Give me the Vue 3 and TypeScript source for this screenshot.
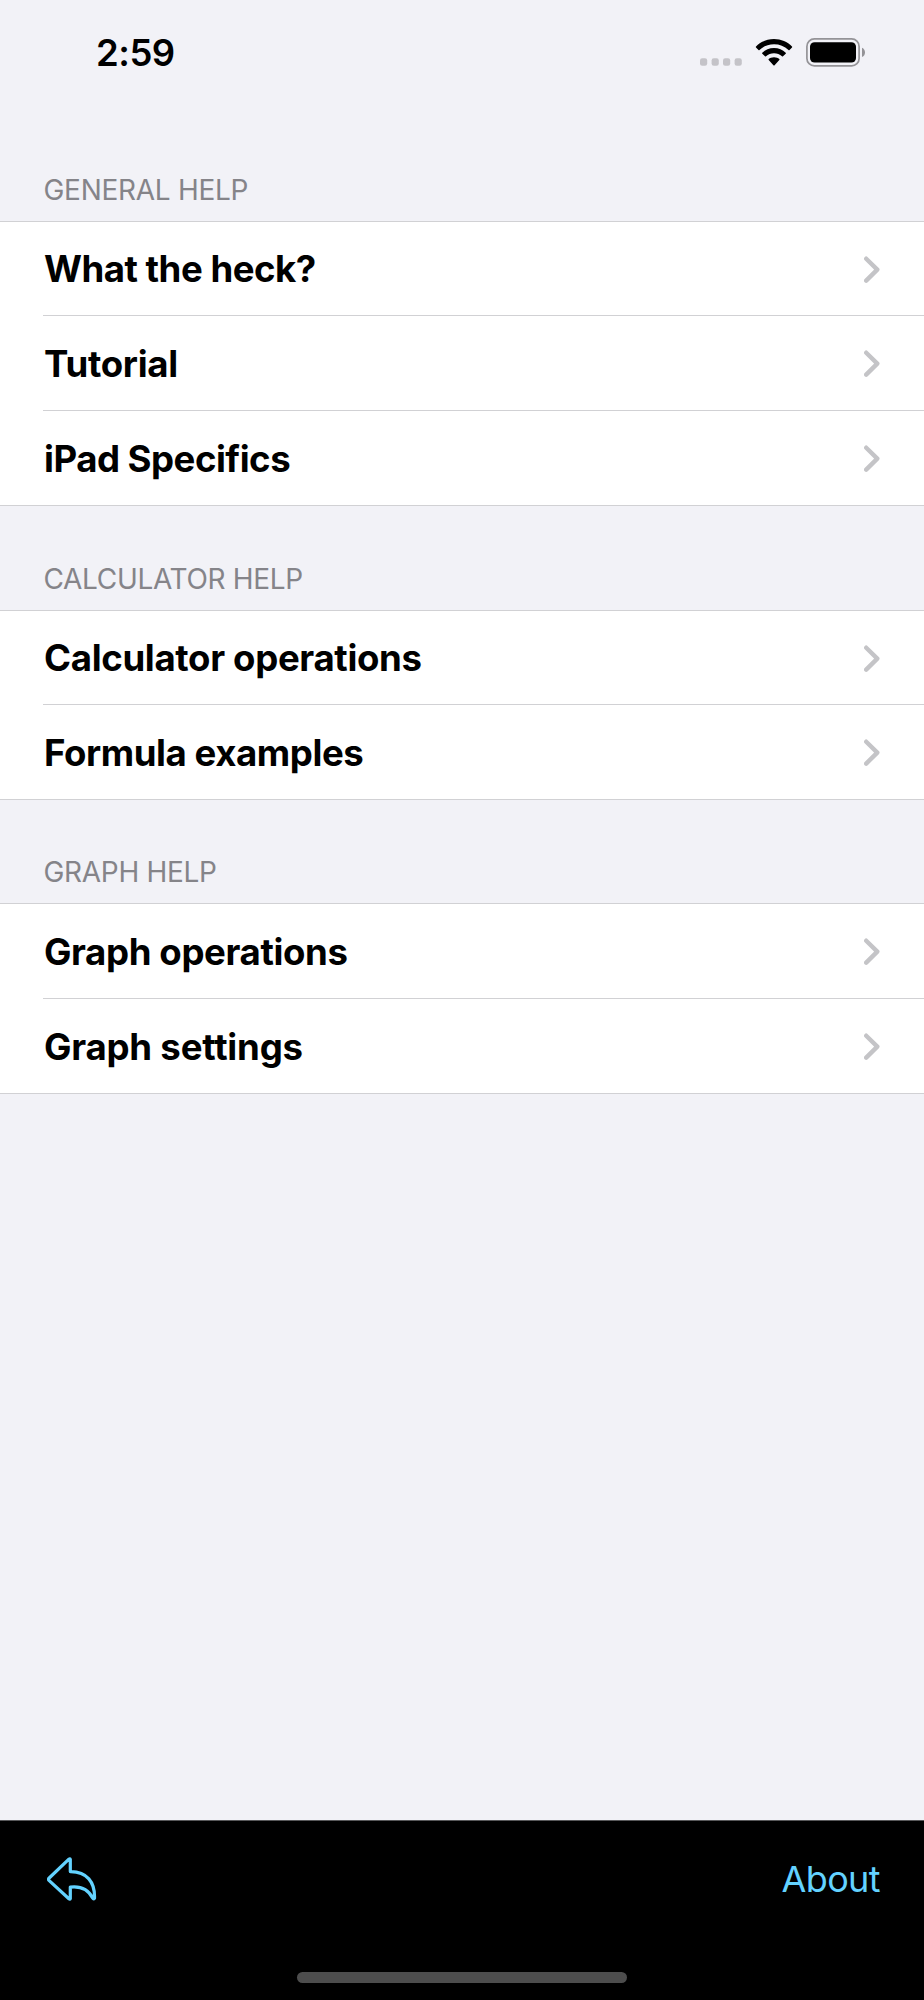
<script setup lang="ts">
interface HelpRow {
  title: string
  spacing: number
}

interface HelpSection {
  id: string
  heading: string
  spacing: number
  rows: HelpRow[]
}

const sections: HelpSection[] = [
  {
    id: 'general',
    heading: 'GENERAL HELP',
    spacing: -0.28,
    rows: [
      { title: 'What the heck?', spacing: -0.48 },
      { title: 'Tutorial', spacing: -0.28 },
      { title: 'iPad Specifics', spacing: -0.5 },
    ],
  },
  {
    id: 'calculator',
    heading: 'CALCULATOR HELP',
    spacing: -0.33,
    rows: [
      { title: 'Calculator operations', spacing: -0.33 },
      { title: 'Formula examples', spacing: -0.42 },
    ],
  },
  {
    id: 'graph',
    heading: 'GRAPH HELP',
    spacing: -0.3,
    rows: [
      { title: 'Graph operations', spacing: -0.37 },
      { title: 'Graph settings', spacing: -0.2 },
    ],
  },
]
</script>

<template>
  <div class="screen">
    <header class="status">
      <span class="time">2:59</span>
      <div class="indicators">
        <svg class="dots" width="42" height="8" viewBox="0 0 42 8">
          <rect x="0" y="0.2" width="7.2" height="7.6" rx="2.2" />
          <rect x="11.6" y="0.2" width="7.2" height="7.6" rx="2.2" />
          <rect x="23" y="0.2" width="7.2" height="7.6" rx="2.2" />
          <rect x="34.6" y="0.2" width="7.2" height="7.6" rx="2.2" />
        </svg>
        <svg class="wifi" width="38" height="28" viewBox="0 0 38 28">
          <path d="M19 0C26.200 0 32.400 2.800 37 7.500Q37.400 8 37 8.500L34.500 11Q34 11.400 33.500 11C29.500 7.300 24.500 5.300 19 5.300C13.500 5.300 8.500 7.300 4.500 11Q4 11.400 3.500 11L1 8.500Q.6 8 1 7.500C5.600 2.800 11.800 0 19 0Z" />
          <path d="M19 9C23.700 9 27.700 10.800 30.700 13.700Q31.200 14.200 30.700 14.700L28 17.300Q27.500 17.700 27 17.300C24.800 15.400 22.100 14.300 19 14.300C15.900 14.300 13.200 15.400 11 17.300Q10.500 17.700 10 17.300L7.300 14.700Q6.800 14.200 7.300 13.700C10.300 10.800 14.300 9 19 9Z" />
          <path d="M19 18.200C21.300 18.200 23 18.900 24.300 20Q24.800 20.500 24.300 21L19.600 26.200Q19 26.800 18.400 26.200L13.700 21Q13.200 20.500 13.700 20C15 18.900 16.700 18.200 19 18.200Z" />
        </svg>
        <svg class="battery" width="60" height="29" viewBox="0 0 60 29">
          <rect x="0.900" y="0.900" width="52.200" height="27" rx="7.500" fill="none" stroke="#949397" stroke-width="1.700" />
          <rect x="4" y="4.200" width="46" height="20.400" rx="4.600" />
          <path d="M56 9.700C60 11.500 60 17.300 56 19Z" fill="#949397" />
        </svg>
      </div>
    </header>

    <main class="content">
      <section v-for="section in sections" :key="section.id" class="section" :class="section.id">
        <h2 class="heading"><span :style="{ letterSpacing: section.spacing + 'px' }">{{ section.heading }}</span></h2>
        <ul class="rows">
          <li v-for="row in section.rows" :key="row.title" class="row">
            <span class="title" :style="{ letterSpacing: row.spacing + 'px' }">{{ row.title }}</span>
            <svg class="chevron" width="16" height="27" viewBox="0 0 16 27">
              <path d="M2.200 2.700L13.300 13.600L2.200 24.600" />
            </svg>
          </li>
        </ul>
      </section>
    </main>

    <footer class="toolbar">
      <div class="actions">
        <svg class="reply" width="52" height="46" viewBox="0 0 52 46">
          <path d="M23.300 2.500Q23 1.300 21.900 2.200L2.200 21Q.9 22.300 2.200 23.600L21.900 41.800Q23 42.700 23.300 41.500V30.100C33.400 28.900 41.600 33 45.800 41.200Q46.500 42.400 47.500 41.200C48.100 25.300 39.900 14.400 23.300 14.600Z" />
        </svg>
        <span class="about">About</span>
      </div>
      <div class="home"></div>
    </footer>
  </div>
</template>

<style>
html,
body {
  margin: 0;
  background: #f2f2f7;
}
</style>

<style scoped>
.screen {
  width: 924px;
  height: 2000px;
  display: flex;
  flex-direction: column;
  overflow: hidden;
  background: #f2f2f7;
  color: #000;
  font-family: Inter, "Liberation Sans", sans-serif;
}

.status {
  height: 117px;
  flex: none;
  box-sizing: border-box;
  padding: 30px 58px 0 96px;
  display: flex;
  justify-content: space-between;
  align-items: flex-start;
}

.time {
  font-size: 36.5px;
  line-height: 46px;
  font-weight: 600;
  letter-spacing: -0.5px;
}

.indicators {
  display: flex;
  align-items: flex-start;
}

.dots {
  margin-top: 28px;
  fill: #c4c3c8;
}

.wifi {
  margin: 9px 0 0 13px;
}

.battery {
  margin: 8px 0 0 13px;
}

.content {
  flex: 1;
}

.heading {
  height: 104px;
  box-sizing: border-box;
  margin: 0;
  padding: 55px 43.5px 0;
  font-size: 28px;
  line-height: 36px;
  font-weight: 400;
  color: #858489;
}

.graph .heading {
  height: 103px;
  padding-top: 54px;
}

.rows {
  list-style: none;
  margin: 0;
  padding: 0;
  background: #fff;
  border-top: 1px solid #d1d1d4;
  border-bottom: 1px solid #d1d1d4;
}

.row {
  height: 94px;
  box-sizing: border-box;
  margin-left: 43px;
  padding: 1px 44px 0 1px;
  display: flex;
  align-items: center;
  justify-content: space-between;
}

.row + .row {
  border-top: 1px solid #d1d1d4;
  height: 95px;
}

.general .row:first-child,
.calculator .row:first-child {
  height: 93px;
}

.title {
  font-size: 36.6px;
  line-height: 46px;
  font-weight: 700;
  white-space: nowrap;
}

.chevron {
  fill: none;
  stroke: #c4c4c7;
  stroke-width: 4.4;
  stroke-linecap: round;
  stroke-linejoin: round;
}

.toolbar {
  flex: none;
  height: 180px;
  box-sizing: border-box;
  background: #000;
  border-top: 1px solid #58585a;
  color: #63d2ff;
  display: flex;
  flex-direction: column;
  align-items: flex-start;
}

.actions {
  width: 100%;
  height: 151px;
  box-sizing: border-box;
  padding: 35px 44px 0 47px;
  display: flex;
  align-items: flex-start;
  justify-content: space-between;
}

.reply {
  margin-top: 1px;
  fill: none;
  stroke: currentColor;
  stroke-width: 3.2;
  stroke-linejoin: round;
}

.about {
  font-size: 36px;
  line-height: 46px;
  letter-spacing: -0.6px;
}

.home {
  width: 330px;
  height: 11px;
  margin-left: 297px;
  border-radius: 6px;
  background: #4d4d4d;
}
</style>
